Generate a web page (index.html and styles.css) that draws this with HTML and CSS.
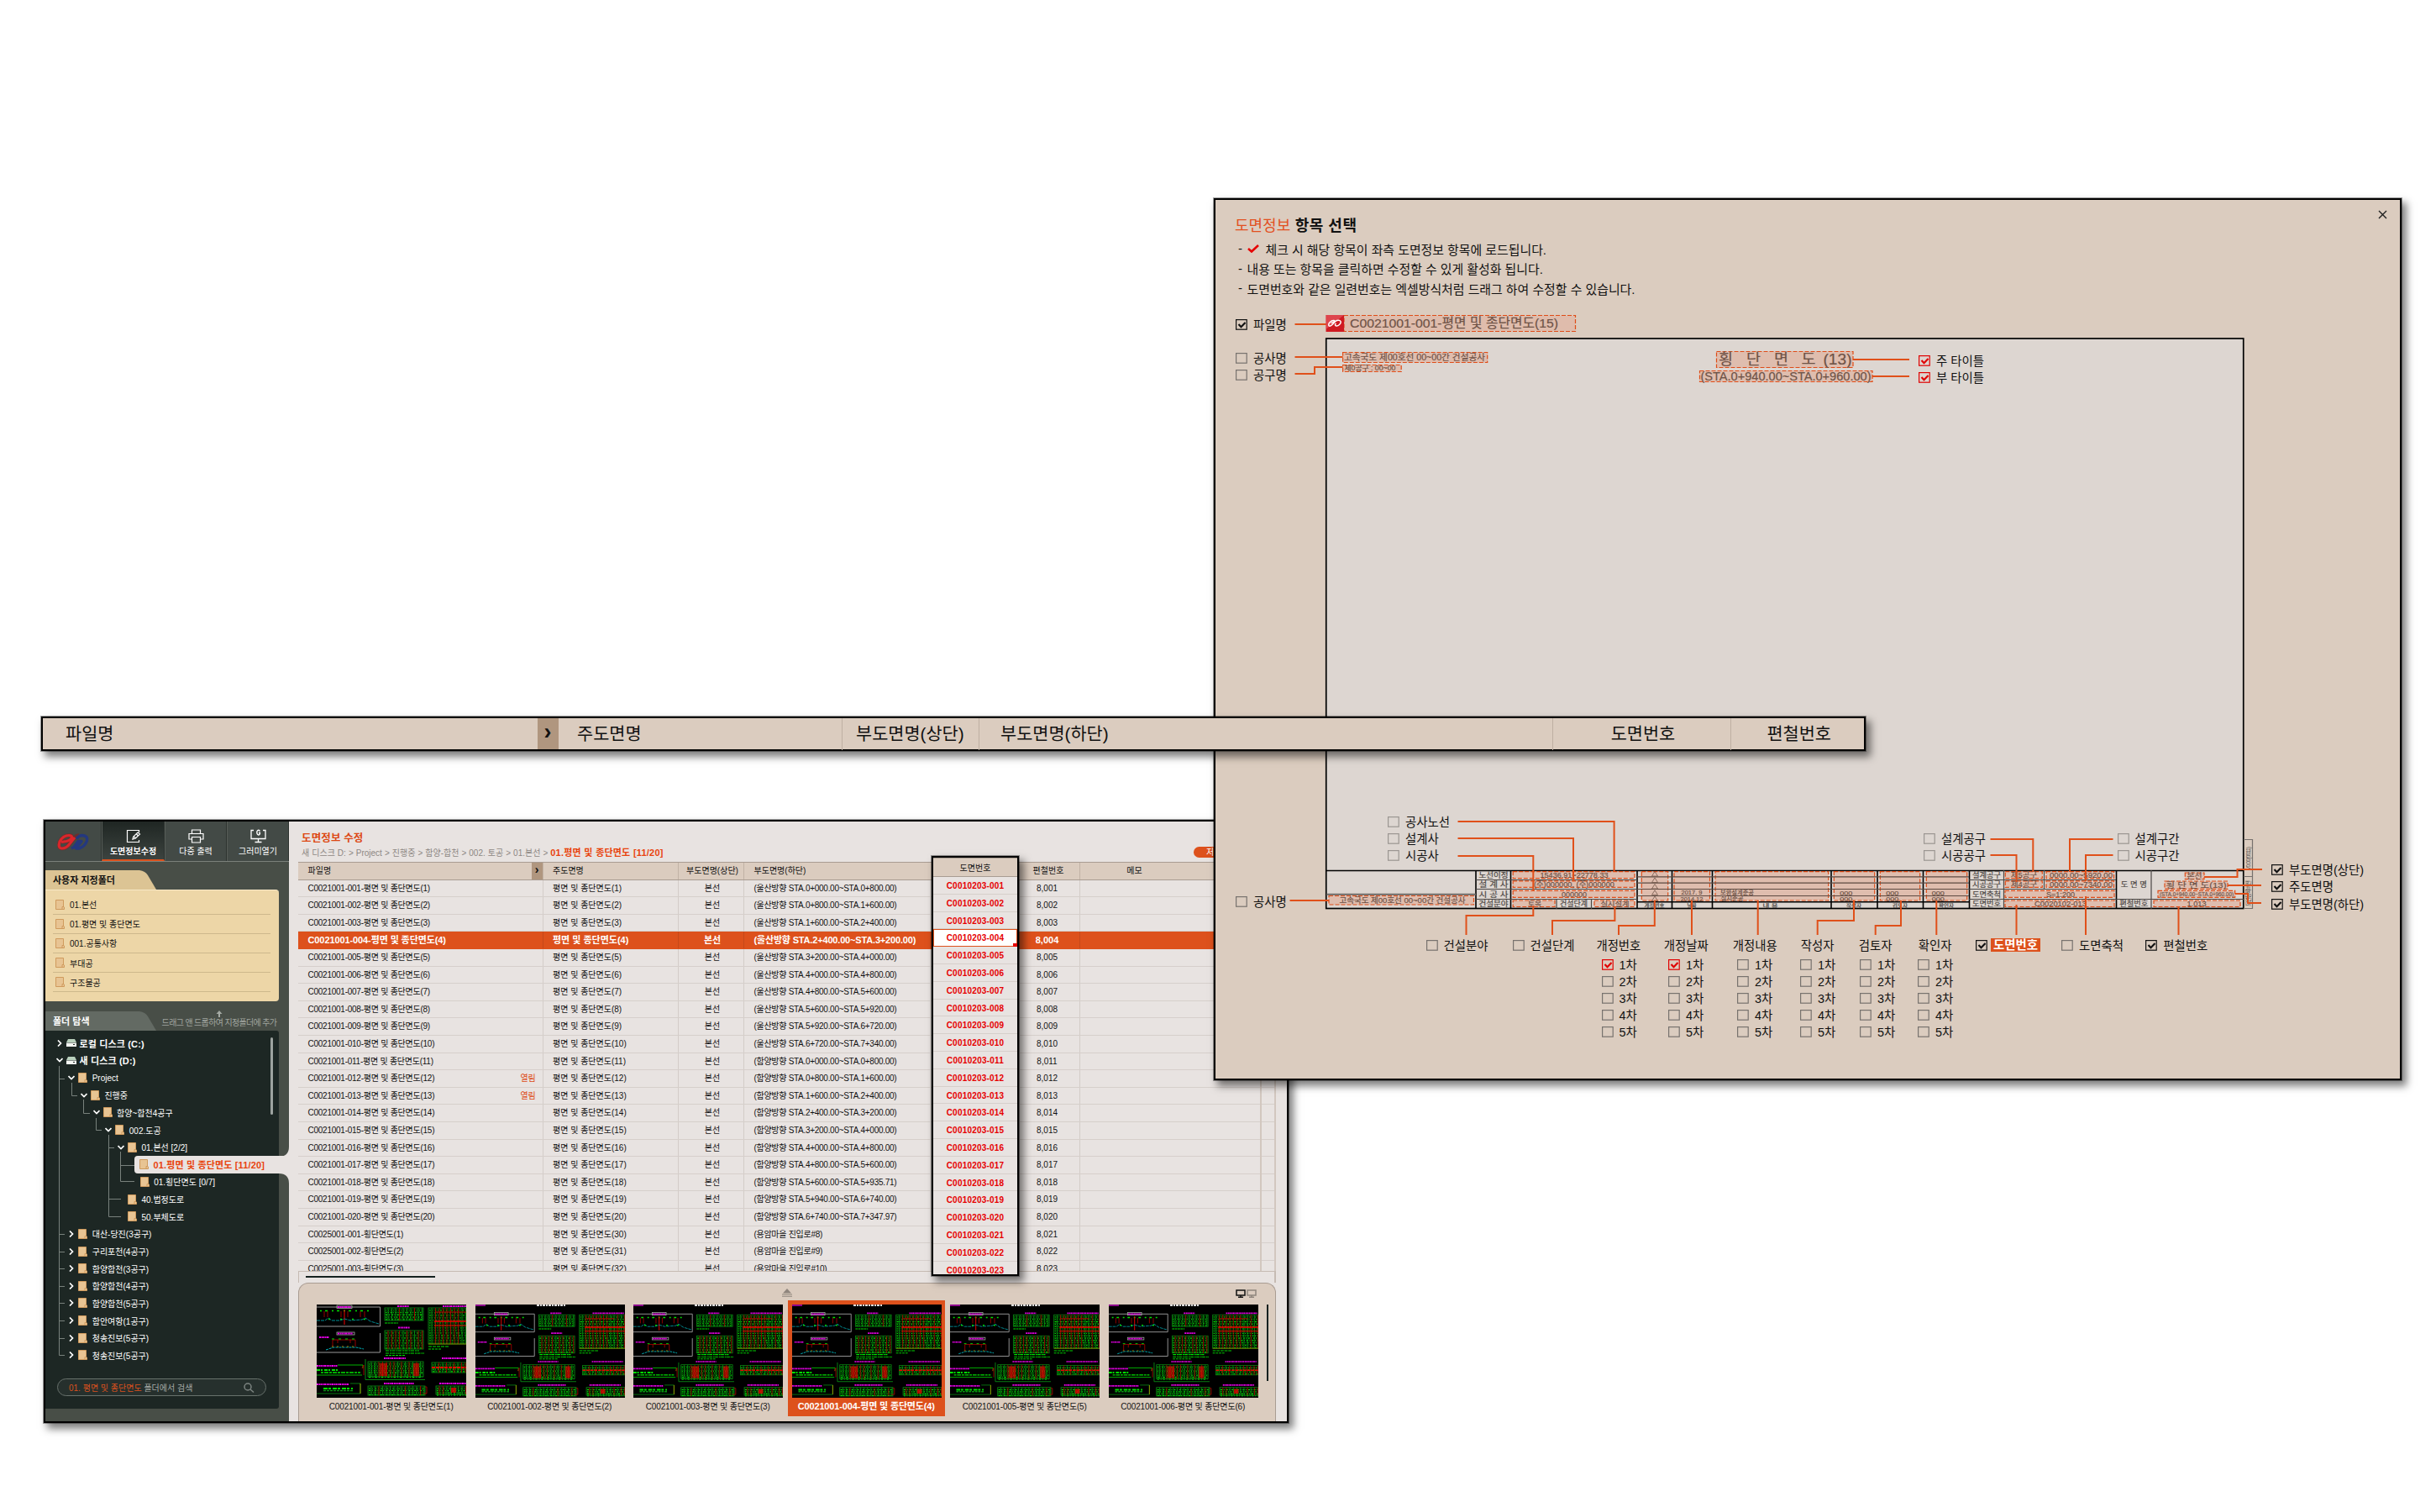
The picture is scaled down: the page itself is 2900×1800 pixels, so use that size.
FILE: index.html
```html
<!DOCTYPE html>
<html lang="ko">
<head>
<meta charset="utf-8">
<title>도면정보 수정</title>
<link rel="stylesheet" href="styles.css">
</head>
<body>
<svg class="defs" aria-hidden="true">
  <defs>
    <symbol id="folder" viewBox="0 0 11 12"><path d="M.5.5h9v8l1 .5v2.500h-10z" fill="#e8c493" stroke="#cf9a5d"/><path d="M8 11V8.500h2" fill="none" stroke="#cf9a5d"/></symbol>
    <symbol id="drive" viewBox="0 0 12 9"><path d="M2 0h8l2 4H0z" fill="#b9d0bd"/><path d="M0 4.500h12V9H0z" fill="#f4f7f3"/><path d="M8 6.500h2" stroke="#1d2724"/></symbol>
    <symbol id="chev" viewBox="0 0 8 8"><path d="M2 .5 5.500 4 2 7.500" fill="none" stroke="#fff" stroke-width="1.700"/></symbol>
    <g id="art"></g>
  </defs>
</svg>

<main class="stage">
  <section class="window app">
    <aside class="side">
      <nav class="tools">
        <div class="tool logo">
          <svg width="40" height="21" viewBox="0 0 40 21" fill="none" stroke-linejoin="round">
            <path d="M6 10.500 12 9.500Q18 8 18.500 4.500 18.500 2.500 15 2.500 8 2.500 4 10 1.500 18 7 18 12 18 16 12.500L22 5Q24 2.500 27 2.500" stroke="#6c2f2c" stroke-width="4.400"/>
            <path d="M24 6.500Q27 2.500 31 2.500 38 3 36.500 9 34 16 27 18L23.500 18 30 9.500 26 9.500 21 16.500 18 18" stroke="#24387f" stroke-width="3.400"/>
            <path d="M6 10.500 12 9.500Q18 8 18.500 4.500 18.500 2.500 15 2.500 8 2.500 4 10 1.500 18 7 18 12 18 16 12.500L22 5" stroke="#d9262b" stroke-width="3.200"/>
          </svg>
        </div>
        <div class="tool on">
          <svg width="18" height="17" viewBox="0 0 18 17" fill="none" stroke="#fff" stroke-width="1.200"><path d="M15.500 4V1.500H1.500v14h14V13"/><path d="m8 12 .8-3L14 4l2.500 2-5.200 5zM9.500 9l2 2M12.500 6l2 2"/></svg>
          <span>도면정보수정</span>
        </div>
        <div class="tool">
          <svg width="19" height="17" viewBox="0 0 19 17" fill="none" stroke="#fff" stroke-width="1.200"><path d="M4.500 5V1h10v4M4.500 12H1V5.500h17V12h-3.500M4.500 9.500h10V16h-10z"/></svg>
          <span>다중 출력</span>
        </div>
        <div class="tool">
          <svg width="19" height="17" viewBox="0 0 19 17" fill="none" stroke="#fff" stroke-width="1.300"><path d="M4 1.500H1v10h17v-10h-3M9.500 12v3M5.500 15.500h8"/><path d="M11.500 2.500Q9.500 0 8 2.500 7.200 6 9.500 7q2 0 2-2.500H10"/></svg>
          <span>그러미열기</span>
        </div>
      </nav>

      <h2 class="tab sand">사용자 지정폴더</h2>
      <ul class="favs">
        <li><svg><use href="#folder"/></svg>01.본선</li>
        <li><svg><use href="#folder"/></svg>01.평면 및 종단면도</li>
        <li><svg><use href="#folder"/></svg>001.공통사항</li>
        <li><svg><use href="#folder"/></svg>부대공</li>
        <li><svg><use href="#folder"/></svg>구조물공</li>
      </ul>

      <div class="tabrow">
        <h2 class="tab moss">폴더 탐색</h2>
        <div class="hint"><svg width="8" height="8" viewBox="0 0 8 8"><path d="M4 0 7.500 4H5v4H3V4H.5z" fill="#a5aaa4"/></svg>드래그 앤 드롭하여 지정폴더에 추가</div>
      </div>
      <div class="explorer">
        <svg class="branches" width="278" height="450" viewBox="54 1227 278 450" fill="none" stroke="#78817c">
          <path d="M70.500 1269V1613.500H77M70.500 1284.500H77M85.500 1289V1304.500H92M99.500 1309V1325.500H107M114.500 1331V1345.500H121M129.500 1351V1448.500H144M129.500 1366.500H136M129.500 1427.500H144M143.500 1371V1406.500H160M143.500 1387.500H160M70.500 1469.500H77M70.500 1490.500H77M70.500 1510.500H77M70.500 1531.500H77M70.500 1551.500H77M70.500 1572.500H77M70.500 1593.500H77"/>
        </svg>
        <ul class="tree" id="tree"></ul>
        <i class="sbar"></i>
        <div class="find"><span><b>01. 평면 및 종단면도</b> 폴더에서 검색</span>
          <svg width="13" height="12" viewBox="0 0 13 12" fill="none" stroke="#7c8480" stroke-width="1.500"><circle cx="5" cy="5" r="4"/><path d="m8 8 4 3.500"/></svg></div>
      </div>
      <svg class="notch" width="12" height="44" viewBox="0 0 12 44"><path d="M12 0Q12 12 0 12V32Q12 32 12 44z" fill="#e8e3e1"/></svg>
    </aside>

    <div class="main">
      <header class="head">
        <h1>도면정보 수정</h1>
        <p>새 디스크 D: &gt; Project &gt; 진행중 &gt; 함양-합천 &gt; 002. 토공 &gt; 01.본선 &gt; <b>01.평면 및 종단면도 [11/20]</b></p>
        <span class="save">저장</span>
      </header>
      <div class="row thead">
        <div>파일명<i>›</i></div><div>주도면명</div><div class="c">부도면명(상단)</div><div>부도면명(하단)</div><div></div><div class="c">편철번호</div><div class="c memo">메모</div>
      </div>
      <div class="rows" id="rows"></div>
      <div class="hscroll"><i></i></div>
      <div class="gallery">
        <div class="gtop">
          <svg width="12" height="10" viewBox="0 0 12 10"><path d="m6 0 5 5.500H1zM0 6.500h12v1H0zM0 8.700h12v1H0z" fill="#8f857d"/></svg>
          <svg class="mons" width="25" height="10" viewBox="0 0 25 10" fill="none" stroke-width="1.500"><path d="M1 1h10v6H1zM6 7v2M3 9.200h6" stroke="#111"/><path d="M14 1h10v6H14zM19 7v2M16 9.200h6" stroke="#8f857d"/></svg>
        </div>
        <div class="thumbs" id="thumbs"></div>
        <i class="gbar"></i>
      </div>
    </div>
  </section>

  <section class="window lift">
    <h3>도면번호</h3>
    <ul id="codes"></ul>
  </section>

  <section class="window dialog">
    <svg class="close" width="11" height="11" viewBox="0 0 11 11"><path d="m1 1 9 9M10 1 1 10" stroke="#222" stroke-width="1.400"/></svg>
    <h1><em>도면정보</em> 항목 선택</h1>
    <ul class="notes">
      <li><svg width="14" height="10" viewBox="0 0 14 10"><path d="M1 5 5 8.500 13 1" fill="none" stroke="#e60000" stroke-width="2.600"/></svg>체크 시 해당 항목이 좌측 도면정보 항목에 로드됩니다.</li>
      <li>내용 또는 항목을 클릭하면 수정할 수 있게 활성화 됩니다.</li>
      <li>도면번호와 같은 일련번호는 엑셀방식처럼 드래그 하여 수정할 수 있습니다.</li>
    </ul>
    <svg class="plan" width="1410" height="1046" viewBox="1447 238 1410 1046">
      <rect x="1578.750" y="403" width="1092" height="678.500" fill="#ddd6d1" stroke="#000" stroke-width="1.700"/>
      <g id="rules" fill="none"></g>
      <g id="fields"></g>
      <path id="wires" fill="none" stroke="#e0501a" stroke-width="2"/>
      <rect x="1578.500" y="375" width="21.500" height="20" fill="#cf1a22"/><path d="M1578.500 375H1600L1578.500 392z" fill="#e8626a" opacity=".6"/>
      <path d="M1582 388c-1.500-3 3-7 6-6.500s-2 3-3.500 3M1582 388c3 2 6-5 9.500-6.500 5-1 6 2 3 5s-7 1-4-1.500" fill="none" stroke="#fff" stroke-width="1.400"/>
    </svg>
    <div class="checks" id="checks"></div>
  </section>

  <section class="window strip">
    <div>파일명<i>›</i></div><div>주도면명</div><div>부도면명(상단)</div><div>부도면명(하단)</div><div class="c">도면번호</div><div class="c">편철번호</div>
  </section>
</main>
<script src="app.js"></script>
</body>
</html>
```
FILE: styles.css
```css
* { box-sizing: border-box; margin: 0; padding: 0; }
body { background: #fff; font-family: "Liberation Sans", "Noto Sans CJK KR", sans-serif; color: #111; }
ul { list-style: none; }
i { font-style: normal; }
.defs { position: absolute; width: 0; height: 0; }
.stage { position: relative; width: 2900px; height: 1800px; overflow: hidden; }
.window { position: absolute; border: 2px solid #000; box-shadow: 0 0 0 1px rgba(0,0,0,.35), 5px 6px 9px 1px rgba(0,0,0,.5); }

/* main application window */
.app { left: 52px; top: 976px; width: 1482px; height: 718px; display: flex; background: #e8e3e1; font-size: 10px; }
.side { position: relative; width: 290px; flex: none; background: #484e47; }
.tools { display: grid; grid-template-columns: 67px 75px 74px 74px; height: 48px; background: #434a46; border-bottom: 1px solid #7b817b; }
.tool { display: flex; flex-direction: column; align-items: center; padding-top: 9px; color: #fff; border-right: 1px solid #2c322f; border-left: 1px solid #575d58; }
.tool span { line-height: 14px; margin-top: 3px; white-space: nowrap; }
.tool.logo { padding-top: 14px; border-left: 0; }
.tool.on { background: linear-gradient(#1f2623, #3c433f); border-bottom: 2px solid #dd511c; font-weight: bold; }
.tab { width: 132px; height: 23px; line-height: 24px; padding-left: 9px; font-size: 11px; clip-path: path("M0 0H112Q119 1 122 6L132 23H0z"); }
.sand { margin-top: 10px; background: #dcc494; }
.moss { background: #636a63; color: #fff; }
.favs { width: 278px; height: 133px; padding: 5.500px 10px 0 9px; background: #edd6a7; border-radius: 0 4px 4px 0; border-top: 1px solid #f7e8c6; }
.favs li { display: flex; align-items: center; gap: 6px; height: 23.200px; padding-left: 3px; border-bottom: 1px solid #cdb88c; white-space: nowrap; }
.favs svg { width: 11px; height: 12px; }
.tabrow { display: flex; justify-content: space-between; margin-top: 12px; height: 23px; width: 278px; }
.hint { display: flex; flex-direction: column; align-items: center; width: 142px; white-space: nowrap; color: #a0a59f; line-height: 14px; letter-spacing: -.65px; }
.hint svg { margin: -1px 0 0; }
.explorer { position: relative; width: 278px; height: 450px; padding-top: 4.500px; background: #1d2724; border-radius: 0 3px 3px 0; color: #fff; }
.branches { position: absolute; left: 0; top: 0; }
.tree li { display: flex; align-items: center; height: 20.650px; padding-left: var(--in); white-space: nowrap; }
.tree .ch { width: 8px; height: 8px; margin-right: 4px; }
.tree .open { transform: rotate(90deg); }
.tree .ic { width: 11px; height: 12px; margin-right: 5.500px; }
.tree .disk { font-size: 11px; font-weight: bold; letter-spacing: .15px; }
.tree .disk .ic { width: 12px; height: 9px; margin-right: 4px; }
.tree .sel span { color: #e8430f; font-weight: bold; font-size: 11px; letter-spacing: .15px; }
.tree .sel { position: relative; margin-left: 106px; width: 184px; height: 20.650px; padding-left: 6px; background: #e8e3e1; border-radius: 4px 0 0 4px; }
.sbar { position: absolute; left: 268px; top: 8px; width: 3px; height: 92px; background: #9da3a0; border-radius: 2px; }
.find { display: flex; align-items: center; justify-content: space-between; margin: 17.500px 0 0 14px; width: 249px; height: 21px; padding: 0 13px; border: 1px solid #68716c; border-radius: 11px; background: #26302d; color: #a4aaa6; white-space: nowrap; }
.find b { color: #d9501d; font-weight: normal; }
.notch { position: absolute; left: 278px; top: 387px; }

.main { position: relative; width: 1188px; padding: 0 13px 0 11px; display: flex; flex-direction: column; }
.head { position: relative; height: 48px; flex: none; padding: 11px 0 0 4px; }
.head h1 { font-size: 12.500px; line-height: 18px; color: #dd4814; letter-spacing: .15px; }
.head p { margin-top: 1px; line-height: 14px; color: #8d8783; white-space: nowrap; word-spacing: .25px; }
.head b { color: #e8430f; font-size: 11px; letter-spacing: .2px; }
.save { position: absolute; left: 1066px; top: 30px; width: 60px; height: 13px; line-height: 13px; padding-left: 15px; border-radius: 7px; background: #dd511c; color: #fff; }
.row { display: grid; grid-template-columns: 291.500px 161.500px 78px 222px 106px 72px 233px; height: 20.600px; line-height: 20px; border-bottom: 1px solid #d6cfcb; white-space: nowrap; width: 1164px; }
.row > div { position: relative; padding-left: 11.500px; border-right: 1px solid #d3ccc8; overflow: hidden; }
.row > .c { padding-left: 0; text-align: center; }
.row > div:nth-child(7) { border-right: 0; }
.row > .c:nth-child(3) { padding-left: 3px; }
.rows .row > .c:nth-child(6) { padding-right: 6px; }
.thead { height: 21.700px; flex: none; background: #dbccbf; border-top: 1px solid #a99c92; border-bottom: 1px solid #a99c92; }
.thead > div { border-color: #c2b3a6; }
.thead > div:nth-child(5), .thead > div:nth-child(4) { border-right: 0; }
.thead > .c:nth-child(6) { padding-right: 3px; }
.thead i { position: absolute; right: 0; top: 0; width: 13px; height: 20px; line-height: 17px; text-align: center; background: #b0967f; font-weight: bold; font-size: 14px; }
.thead .memo { padding-right: 104px; }
.rows { height: 465px; flex: none; overflow: hidden; position: relative; }
.rows::after { content: ""; position: absolute; right: 0; top: 0; width: 15px; height: 465px; border-left: 2px solid #d2c7bf; border-right: 2px solid #d2c7bf; }
.rows .row > div:nth-child(1), .rows .row > div:nth-child(4) { letter-spacing: -.25px; }
.rows .row > div:nth-child(4) { letter-spacing: -.29px; }
.rows .opened { position: absolute; right: 8px; color: #dd4814; }
.row.sel { background: #dd511c; color: #fff; font-weight: bold; font-size: 11px; border-color: #dd511c; }
.row.sel > div { border-color: #c5481a; }
.rows .row.sel > div:nth-child(1) { letter-spacing: -.1px; }
.rows .row.sel > div:nth-child(4) { letter-spacing: -.17px; }
.hscroll { height: 14px; flex: none; border: 1px solid #c6bbb3; border-width: 1px 2px 0 1px; padding: 5.500px 8px; }
.hscroll i { display: block; width: 154px; height: 2px; background: #14211f; }
.gallery { position: relative; flex: 1; background: #dbccbf; border: 1px solid #a99c92; border-bottom: 0; border-radius: 12px 12px 0 0; }
.gtop { display: flex; justify-content: center; height: 20px; padding-top: 6px; }
.gtop .mons { position: absolute; right: 22px; top: 7px; }
.thumbs { display: flex; gap: 2px; padding-left: 16.500px; }
.thumb { width: 186.500px; height: 138px; padding: 5px 4.500px 0; text-align: center; }
.thumb svg { display: block; width: 178px; height: 111px; background: #000; }
.thumb p { line-height: 21px; white-space: nowrap; letter-spacing: -.15px; }
.thumb.sel { background: #dd511c; color: #fff; font-weight: bold; font-size: 11px; }
.gbar { position: absolute; right: 8px; top: 25px; width: 2px; height: 91px; background: #14211f; }

/* lifted number column */
.lift { left: 1109px; top: 1019px; width: 104px; height: 500px; overflow: hidden; background: #e8e3e1; font-size: 10px; text-align: center; }
.lift h3 { height: 23px; line-height: 23px; font-size: 10px; font-weight: normal; background: #dbccbf; border-top: 1px solid #a99c92; border-bottom: 1px solid #a99c92; }
.lift li { height: 20.800px; line-height: 21px; border-bottom: 1px solid #d6cfcb; font-weight: bold; color: #e60000; letter-spacing: .2px; }
.lift li.sel { position: relative; background: #fff; border: 1px solid #dd511c; line-height: 19px; }
.lift li.sel::after { content: ""; position: absolute; right: -1px; bottom: -1px; width: 5px; height: 4px; background: #e60000; }

/* column header strip */
.strip { left: 49px; top: 853px; width: 2172px; height: 41px; display: grid; grid-template-columns: 613.500px 338.500px 163px 682.500px 212px 1fr; background: #dbccbf; font-size: 20.800px; line-height: 38px; white-space: nowrap; }
.strip > div { position: relative; padding-left: 22.500px; border-right: 1px solid #bfb0a3; }
.strip > div:nth-child(1) { padding-left: 27px; border: 0; }
.strip > div:nth-child(3) { padding-left: 16px; }
.strip > div:nth-child(4) { padding-left: 25px; }
.strip > div:nth-child(6) { border: 0; }
.strip > .c { padding: 0 0 0 4px; text-align: center; }
.strip i { position: absolute; right: 0; top: 0; width: 25px; height: 37px; line-height: 32px; text-align: center; background: #b0967f; font-size: 27px; font-weight: bold; }

/* item selection dialog */
.dialog { left: 1445px; top: 236px; width: 1414px; height: 1050px; background: #dbccbf; padding: 18px 0 0 23px; }
.dialog h1 { font-size: 18px; line-height: 26px; letter-spacing: .5px; }
.dialog em { font-style: normal; font-weight: normal; color: #e2501f; letter-spacing: 0; }
.notes { padding-top: 2.500px; }
.notes li { display: flex; align-items: center; height: 23.500px; font-size: 14.900px; white-space: nowrap; padding-left: 4px; }
.notes li::before { content: "-"; width: 10.500px; }
.notes svg { margin-right: 8px; }
.close { position: absolute; right: 15px; top: 12px; }
.plan { position: absolute; left: 0; top: 0; }
.checks label { position: absolute; display: flex; align-items: center; gap: 7px; height: 20px; font-size: 14.400px; white-space: nowrap; }
.checks label span { margin-top: -1.500px; }
.checks svg { width: 14px; height: 13px; flex: none; }
.checks .hot span { background: #dd511c; color: #fff; font-weight: bold; line-height: 16px; padding: 0 3px; margin: 0 0 0 -3px; }
```
FILE: app.js
```js
const $ = id => document.getElementById(id);
const pad = n => String(n).padStart(3, '0');

// folder tree: depth, label, state, kind
const tree = [
  [0, '로컬 디스크 (C:)', 'shut', 'disk'], [0, '새 디스크 (D:)', 'open', 'disk'],
  [1, 'Project', 'open'], [2, '진행중', 'open'], [3, '함양~합천4공구', 'open'], [4, '002.도공', 'open'],
  [5, '01.본선 [2/2]', 'open'], [6, '01.평면 및 종단면도 [11/20]', '', 'sel'], [6, '01.횡단면도 [0/7]', ''],
  [5, '40.법정도로', ''], [5, '50.부체도로', ''],
  [1, '대산-당진(3공구)', 'shut'], [1, '구리포천(4공구)', 'shut'], [1, '함양합천(3공구)', 'shut'],
  [1, '함양합천(4공구)', 'shut'], [1, '함양합천(5공구)', 'shut'], [1, '함안여항(1공구)', 'shut'],
  [1, '청송진보(5공구)', 'shut'], [1, '청송진보(5공구)', 'shut']
];
$('tree').innerHTML = tree.map(([d, t, s, k]) => {
  const inset = 12.5 + d * 14.7 + (s ? 0 : 12);
  const ch = s ? `<svg class="ch ${s}"><use href="#chev"/></svg>` : '';
  return `<li class="${k || ''}" ${k === 'sel' ? '' : `style="--in:${inset}px"`}>${ch}<svg class="ic"><use href="#${k === 'disk' ? 'drive' : 'folder'}"/></svg><span>${t}</span></li>`;
}).join('');

// drawing list
const sta = ['0+000.00', '0+800.00', '1+600.00', '2+400.00', '3+200.00', '4+000.00', '4+800.00', '5+600.00'];
const spans = sta.slice(1).map((e, i) => [sta[i], e]);
const ranges = [
  ...spans.map(s => ['울산', ...s]), ['울산', '5+600.00', '5+920.00'], ['울산', '5+920.00', '6+720.00'], ['울산', '6+720.00', '7+340.00'],
  ...spans.map(s => ['함양', ...s]), ['함양', '5+600.00', '5+935.71'], ['함양', '5+940.00', '6+740.00'], ['함양', '6+740.00', '7+347.97']
];
let rows = '', codes = '';
for (let n = 1; n <= 23; n++) {
  const late = n > 20;
  const file = late ? `C0025001-${pad(n - 20)}-횡단면도(${n - 20})` : `C0021001-${pad(n)}-평면 및 종단면도(${n})`;
  const r = ranges[n - 1];
  const sub = late ? `(용암마을 진입로#${n - 13})` : `(${r[0]}방향 STA.${r[1]}~STA.${r[2]})`;
  const opened = n === 12 || n === 13 ? '<span class="opened">열림</span>' : '';
  const sel = n === 4 ? ' sel' : '';
  rows += `<div class="row${sel}"><div>${file}${opened}</div><div>평면 및 종단면도(${late ? n + 9 : n})</div><div class="c">본선</div><div>${sub}</div><div></div><div class="c">8,${pad(n)}</div><div></div></div>`;
  codes += `<li class="${sel}">C0010203-${pad(n)}</li>`;
}
$('rows').innerHTML = rows;
$('codes').innerHTML = codes;

// CAD preview artwork
let seed = 7;
const rnd = () => (seed = (seed * 16807) % 2147483647) / 2147483647;
const line = (x1, y1, x2, y2, c, w = 1, dash = '') => `<path d="M${x1} ${y1}L${x2} ${y2}" stroke="${c}" stroke-width="${w}" ${dash && `stroke-dasharray="${dash}"`}/>`;
const G = '#00e200', D = '#0a9414', R = '#f00000', M = '#e800e8', W = '#9a9a9a', C = '#00b0b8';
function grid(x, y, w, h, red, step = 3) {
  let s = `<rect x="${x}" y="${y}" width="${w}" height="${h}" fill="none" stroke="${D}" stroke-width=".8"/>`;
  for (let j = y + 2; j < y + h; j += step) s += line(x, j, x + w, j, D, .4) + line(x + 1, j + 1, x + w - 1, j + 1, G, 1.2, `${1 + rnd() * 1.5} ${1.2 + rnd()} 1 2`);
  for (let i = x + 4; i < x + w; i += 4.5) s += line(i, y, i, y + h, rnd() < red ? '#b80000' : D, .8);
  return s;
}
const head = (x, y, w) => line(x, y, x + w, y, M, 1.8, '2 .6 1.500 .4');
let a = '<g fill="none">';
a += `<path d="M0 3H75.500V26H0M75.500 34V57H0" stroke="${W}"/><rect x="24" y="1" width="18" height="3.500" stroke="#aaa" stroke-width=".8"/><rect x="24" y="33" width="21" height="3" stroke="#aaa" stroke-width=".8"/>`;
a += head(25, 3, 16) + head(25, 34.5, 18) + head(3, 39, 12);
a += line(4, 7.5, 62, 7.5, G, 1.4, '2 4 3 5') + [9, 13, 29, 37, 52, 57].map(x => line(x, 8, x, 15, '#b00', .8)).join('') + line(33, 6, 33, 24, R, 1);
a += `<path d="M0 19H10L14 16 18 19H28L33 17 40 19 54 18 58 16 64 20 74 23" stroke="${C}" stroke-width=".8" stroke-dasharray="4 1"/>` + line(14, 17.5, 60, 17.5, G, 1.6, '2 12');
a += `<path d="M19 50V42H46V50M25 42V46M40 42V46" stroke="#b00" stroke-width=".8"/><path d="M11 54 20 51H47L56 53" stroke="${C}" stroke-width="1" stroke-dasharray="3 1"/>` + line(18, 41, 47, 41, G, 1, '3 5') + line(18, 50, 46, 50, '#aa8800', 1, '2 4');
a += head(96, 2, 14) + grid(81, 4, 46, 15, .3, 2.7) + line(81, 22, 97, 22, G, 1.2, '3 .6') + head(97, 27.5, 14) + grid(81, 31, 46, 22, .8);
a += line(82, 55, 122, 55, G, 1.2, '4 1 2 .5') + line(82, 58, 128, 58, G, 1, '4 1 2 .5') + line(82, 60.5, 105, 60.5, G, 1, '3 1');
a += head(150, 2, 40) + grid(133, 4, 62, 43, .75) + line(140, 20, 195, 20, R, 1.6) + line(140, 25, 195, 25, R, 1) + line(141, 9, 178, 9, '#b00', 1) + line(133, 47, 195, 47, '#7a7a00', 1) + line(133, 50, 157, 50, G, 1, '4 1') + line(133, 53, 148, 53, G, 1, '3 1');
a += head(80, 64, 26) + `<path d="M58 65V89.500H129" stroke="${D}" stroke-width=".9"/>` + grid(61, 68, 66, 18, .5, 2.6) + [[75, 9], [115, 7]].map(([x, w]) => `<rect x="${x}" y="70" width="${w}" height="15" fill="#f00000" opacity=".6"/>`).join('');
a += head(0, 73, 25) + `<path d="M25 72H55V76M0 84H54" stroke="${G}" stroke-width=".8"/><path d="M54 76 56 72V84" stroke="#b00" stroke-width=".8"/>` + line(0, 78, 26, 78, G, 2, '4 1 2 2') + line(5, 81, 52, 81, G, 1.4, '3 1 5 1');
a += head(149, 64, 40) + grid(137, 69, 58, 12, .6, 2.6) + line(137, 75, 195, 75, R, 1.8, '4 1');
a += head(0, 95, 38) + `<path d="M0 106H52V94H40" stroke="${D}" stroke-width=".8"/><path d="M52 94V106" stroke="#990"/>` + line(8, 100, 43, 100, G, 2, '5 1 3 2') + line(8, 102.5, 43, 102.5, D, 1.6, '3 1');
a += head(80, 94, 36) + grid(61, 97, 68, 11, .3, 2.5) + `<path d="M129 98H131V106H127" stroke="#b00" stroke-width=".8"/>`;
a += head(146, 94, 40) + grid(142, 97, 50, 10, .5, 2.6) + '<rect x="160" y="99" width="6" height="6" fill="#e00000" opacity=".8"/>';
$('art').innerHTML = a + '</g>';
let thumbs = '';
for (let n = 1; n <= 6; n++) {
  const art = n === 1 ? '<use href="#art"/>' : `<use href="#art" transform="translate(0 8.500) scale(.93)"/>${line(73, 1, 108, 1, '#ddd', 2, '3 1 2 1')}${line(0, 1, 12, 1, M, 1.2)}`;
  thumbs += `<div class="thumb${n === 4 ? ' sel' : ''}"><svg viewBox="0 0 178 111">${art}</svg><p>C0021001-${pad(n)}-평면 및 종단면도(${n})</p></div>`;
}
$('thumbs').innerHTML = thumbs;

// title block rules
$('rules').innerHTML = `
<path stroke="#000" stroke-width="1.600" d="M1579 1036.500H2671M1757 1036V1082M1798.500 1036V1082M1949 1036V1082M1990.500 1036V1082M2038.500 1036V1082M2180 1036V1082M2235 1036V1082M2289.500 1036V1082M2344.500 1036V1082M2519.500 1036V1082M1949 1073.800H2344"/>
<path stroke="#4b4745" stroke-width="1.200" d="M1757 1047.500H1949M1757 1058.500H1949M1757 1070.500H1949M1853 1070V1082M1894.500 1070V1082M2344 1047.500H2519M2344 1058.500H2519M2344 1070.500H2671M2385.500 1036V1082M2433.500 1036V1058M2561 1036V1082"/>
<path stroke="#6d6865" stroke-width="2" d="M1579 1064.700H1757"/>
<path stroke="#77716d" stroke-width="1.200" d="M2671 999.500H2681.500V1081.500H2671M2671 1043.500H2681.500"/>`;

// editable fields: x1, y1, x2, y2, text, textX, textWidth, fontSize
const R1 = [1037.7, 1045.7], R2 = [1048.8, 1056.4], R3 = [1060.3, 1068.3], R4 = [1072, 1079.5];
const fields = [
  [1600, 375.5, 1875.5, 394.5, 'C0021001-001-평면 및 종단면도(15)', 1731, 248, 15.5],
  [1598.6, 419.5, 1770.7, 431.5, '고속국도 제00호선 00~00간 건설공사', 1684, 168, 10.5],
  [1598.6, 434.5, 1668.2, 442.5, '제0공구 : 00~00', 1631, 61, 8.5],
  [2043.5, 418.5, 2206, 437.5, '', 0, 0, 0],
  [2023.5, 441.5, 2229, 454.5, '(STA.0+940.00~STA.0+960.00)', 2126, 203, 14.5],
  [1582, 1066.5, 1754.5, 1077, '고속국도 제00호선 00~00간 건설공사', 1669.5, 150, 9.5],
  [1801.2, R1[0], 1946, R1[1], '15436.91~22778.33', 1874, 81, 9.5],
  [1801.2, R2[0], 1946, R2[1], '(주)000000, (주)000000', 1874, 96, 9],
  [1801.2, R3[0], 1946, R3[1], '000000', 1874, 30, 9.5],
  [1801.2, R4[0], 1851, R4[1], '토목', 1827, 16, 8.5],
  [1898, R4[0], 1946, R4[1], '실시설계', 1922.5, 34, 8.5],
  [1954.3, 1037.7, 1985.7, 1072], [1993, 1037.7, 2035.5, 1072], [2042, 1037.7, 2176.7, 1072],
  [2183.3, 1037.7, 2231.7, 1072], [2238.3, 1037.7, 2285.7, 1072], [2293.3, 1037.7, 2341.7, 1072],
  [2387.3, R1[0], 2431.3, R1[1], '제5공구', 2409.5, 31, 9],
  [2387.3, R2[0], 2431.3, R2[1], '제4공구', 2409.5, 31, 9],
  [2436, R1[0], 2516.6, R1[1], '0000.00~5920.00', 2477.5, 75, 9],
  [2436, R2[0], 2516.6, R2[1], '0000.00~7340.00', 2477.5, 75, 9],
  [2387, R3[0], 2517, R3[1], 'S=1:200', 2453, 34, 9.5],
  [2387, R4[0], 2517, R4[1], 'C0020102-013', 2453, 62, 9.5],
  [2601.3, 1039, 2624, 1046.7, '본선', 2612.5, 18, 9],
  [2577, 1049, 2652, 1058.3, '횡 단 면 도(13)', 2614.5, 72, 9.5],
  [2569, R3[0], 2660.7, R3[1], '(STA.0+940.00~STA.0+960.00)', 2615, 88, 7.5],
  [2564, R4[0], 2667, R4[1], '1.013', 2615, 23, 9.5]
];
const txt = (t, x, y, w, s, c = '#6f5347') => `<text x="${x}" y="${y + s * .35}" text-anchor="middle" font-size="${s}" textLength="${w}" lengthAdjust="spacingAndGlyphs" fill="${c}" stroke="${c}" stroke-width=".2">${t}</text>`;
let f = fields.map(([x1, y1, x2, y2, t, tx, w, s]) =>
  `<rect x="${x1}" y="${y1}" width="${x2 - x1}" height="${y2 - y1}" fill="#dfb9a8" fill-opacity=".85" stroke="#df4c17" stroke-width="1.200" stroke-dasharray="5 2"/>` +
  (t ? txt(t, tx, (y1 + y2) / 2, w, s) : '')).join('');
f += `<path fill="none" stroke="#5d4a41" stroke-width="1.200" d="M1949 1043.800H2344M1949 1051.200H2344M1949 1058.500H2344M1949 1066.500H2344"/>`;
[['횡', 2054.5], ['단', 2087.5], ['면', 2120.5], ['도', 2153]].forEach(([t, x]) => f += txt(t, x, 428, 17, 18));
f += txt('(13)', 2187.5, 428, 34, 18);
const g = '#4d4845';
[['노선이정', 1042], ['설 계 사', 1053], ['시 공 사', 1064.5], ['건설분야', 1075.5]].forEach(([t, y]) => f += txt(t, 1778, y, 35, 9, g));
[['설계공구', 1042], ['시공공구', 1053], ['도면축척', 1064.5], ['도면번호', 1075.5]].forEach(([t, y]) => f += txt(t, 2365, y, 34, 9, g));
f += txt('건설단계', 1873.5, 1075.5, 33, 9, g) + txt('도 면 명', 2540.3, 1052.5, 31, 9, g) + txt('편철번호', 2540.3, 1075.5, 34, 9, g);
[['개정번호', 1969.5, 24], ['날짜', 2014, 11], ['내 용', 2107.5, 18], ['작성자', 2207, 18], ['검토자', 2262, 18], ['확인자', 2317, 18]].forEach(([t, x, w]) => f += txt(t, x, 1077.7, w, 5.5, g));
f += txt('2017. 9', 2014, 1062.7, 25, 7.5) + txt('2014.12', 2014, 1070, 27, 7.5) + txt('보완설계준공', 2068, 1062.5, 40, 7) + txt('실시준공', 2062, 1069.8, 27, 7);
[2197.7, 2252.7, 2307.3].forEach(x => f += txt('000', x, 1062.7, 15, 8) + txt('000', x, 1070, 15, 8));
[1040.5, 1048, 1055.5, 1062.8, 1070].forEach(y => f += `<path d="M1966.500 ${y + 2.5}h7l-3.500-5.500z" fill="none" stroke="#75594c" stroke-width=".8"/>`);
f += `<text transform="translate(2678.500 1036) rotate(-90)" font-size="6.500" textLength="28" fill="${g}">V0.00(0011)</text><text transform="translate(2679 1079) rotate(-90)" font-size="6.500" textLength="31" fill="${g}">도면등록버전</text>`;
$('fields').innerHTML = f;

$('wires').setAttribute('d', [
  'M1541.500 386H1579', 'M1541.500 425H1598.600', 'M1541.500 445H1565V437H1598.600',
  'M2206 428H2273', 'M2229 448H2273',
  'M1735.500 978H1921.600V1038', 'M1735.500 998H1873V1049', 'M1735.500 1019H1825.300V1060.500', 'M1535.500 1072H1582',
  'M1825.300 1078V1090H1745.500V1113', 'M1922.400 1079V1096H1848V1113', 'M1969.800 1072V1102H1927V1113',
  'M2014 1072V1113', 'M2092.700 1072V1113', 'M2207 1072V1096H2163.700V1113', 'M2263 1072V1102H2232.700V1113', 'M2305.300 1072V1113',
  'M2369.500 999H2420.300V1038', 'M2369.500 1018H2400.500V1050', 'M2515.500 999H2464V1038', 'M2515.500 1018H2483V1049',
  'M2400.500 1077V1113', 'M2483 1067V1113', 'M2593.500 1079V1113',
  'M2624 1044H2663.500V1035H2693', 'M2652 1054H2692', 'M2661 1064H2676V1075H2692'
].join(''));

// check items: x, centre y, label, state (k = checked, r = checked red, o = on sheet, '' = empty, t = text only)
const items = [
  [1471, 386.5, '파일명', 'k'], [1471, 426, '공사명', ''], [1471, 446.5, '공구명', ''],
  [2284, 429, '주 타이틀', 'r'], [2284, 449, '부 타이틀', 'r'],
  [1652, 978, '공사노선', 'o'], [1652, 998, '설계사', 'o'], [1652, 1018.5, '시공사', 'o'], [1471, 1073, '공사명', ''],
  [2290, 998, '설계공구', 'o'], [2290, 1018, '시공공구', 'o'], [2520.5, 998, '설계구간', 'o'], [2520.5, 1018, '시공구간', 'o'],
  [2704, 1035, '부도면명(상단)', 'k'], [2704, 1055, '주도면명', 'k'], [2704, 1076, '부도면명(하단)', 'k'],
  [1697.5, 1125, '건설분야', ''], [1800.5, 1125, '건설단계', ''],
  [1900.4, 1125, '개정번호', 't'], [1980.8, 1125, '개정날짜', 't'], [2062.7, 1125, '개정내용', 't'],
  [2143.7, 1125, '작성자', 't'], [2212.7, 1125, '검토자', 't'], [2283.7, 1125, '확인자', 't'],
  [2352, 1125, '도면번호', 'k hot'], [2454, 1125, '도면축척', ''], [2554.3, 1125, '편철번호', 'k']
];
[1906.5, 1986, 2068, 2143, 2214, 2283].forEach((x, c) => {
  for (let n = 0; n < 5; n++) items.push([x, 1148.3 + n * 20, `${n + 1}차`, n === 0 && c < 2 ? 'r' : '']);
});
$('checks').innerHTML = items.map(([x, y, t, s]) => {
  const k = s[0], col = k === 'k' ? '#111' : k === 'r' ? '#e00000' : k === 'o' ? '#9b9692' : '#77726e';
  const tick = k === 'k' || k === 'r' ? `<path d="m3.500 6 3 3.200 5-5.200" stroke-width="2.200"/>` : '';
  const box = k === 't' ? '' : `<svg viewBox="0 0 14 13" fill="none" stroke="${col}"><rect x=".6" y=".6" width="12.600" height="11.600" stroke-width="1.200"/>${tick}</svg>`;
  return `<label class="${s}" style="left:${x - 1447}px;top:${y - 248}px">${box}<span>${t}</span></label>`;
}).join('');
```
